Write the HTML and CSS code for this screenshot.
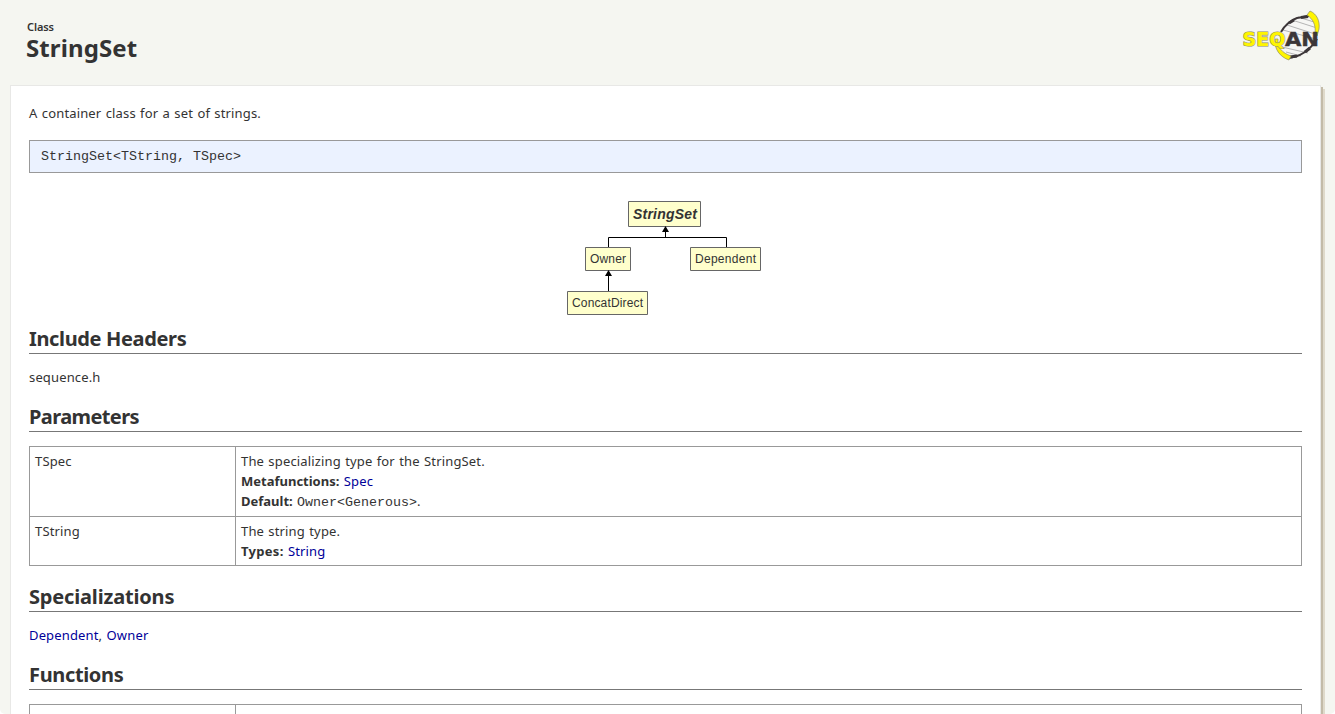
FILE: index.html
```html
<!DOCTYPE html>
<html lang="en">
<head>
<meta charset="utf-8">
<title>StringSet</title>
<link rel="stylesheet" href="styles.css">
</head>
<body>
<header class="header">
  <div>
    <div class="kind">Class</div>
    <h1 class="title">StringSet</h1>
  </div>
  <svg class="logo" width="84" height="56" viewBox="0 0 84 56">
    <path d="M40 24C46 14 56 9 67 8C75 11 79 20 78 30C71 42 61 48 51 49C42 46 37 35 40 24Z" fill="#f6f6f4"/>
    <path d="M47 17l28 9M52 12l25 8M58 9l16 5M43 22l33 9M42 39l26 6M46 44l15 4" stroke="#b4b4b4" stroke-width="1"/>
    <path d="M41 24C44 18 51 12 57 10L69 8M48 50C60 49 70 42 77 31" fill="none" stroke="#3c3638" stroke-width="2"/>
    <path d="M49 15l5-3M61 9.500l7-1M50 49l7-1M65 44l5-4" stroke="#3c3638" stroke-width="3"/>
    <path d="M70 3C77 6 80 13 79 21L77 28L75 25C76 17 73 11 67 7Z" fill="#fff500" stroke="#8e8c60" stroke-width=".7"/>
    <path d="M38 31C37 39 42 45 51 48L49 52C40 49 34 41 35 31Z" fill="#fff500" stroke="#8e8c60" stroke-width=".7"/>
    <text class="logo-yellow" x="2.500" y="37.500" textLength="43" lengthAdjust="spacingAndGlyphs">SEQ</text>
    <text class="logo-dark" x="45" y="37.500" textLength="34" lengthAdjust="spacingAndGlyphs">AN</text>
  </svg>
</header>
<main class="panel">
  <p class="summary">A container class for a set of strings.</p>
  <pre class="signature">StringSet&lt;TString, TSpec&gt;</pre>
  <svg class="graph" width="196" height="116" viewBox="0 0 196 116">
    <g class="node"><path d="M62.500 1.500h72v25h-72zM19.500 47.500h45v23h-45zM124.500 47.500h70v23h-70zM1.500 91.500h80v23h-80z"/></g>
    <path class="edge" d="M42.500 47V37.500H160.500V47M99.500 37V28M42.500 91V72"/>
    <path d="M99.500 26l3.500 6h-7zM42.500 70l3.500 6h-7z"/>
    <text class="root" x="67" y="19" textLength="64">StringSet</text>
    <text x="24" y="63" textLength="36">Owner</text>
    <text x="129" y="63" textLength="61">Dependent</text>
    <text x="6" y="107" textLength="71">ConcatDirect</text>
  </svg>
  <h2>Include Headers</h2>
  <p>sequence.h</p>
  <h2 class="params">Parameters</h2>
  <table>
    <tr class="tall"><td class="key">TSpec</td><td>The specializing type for the StringSet.<br><b>Metafunctions:</b> <a>Spec</a><br><b>Default:</b> <code>Owner&lt;Generous&gt;</code>.</td></tr>
    <tr><td class="key">TString</td><td>The string type.<br><b class="types">Types:</b> <a>String</a></td></tr>
  </table>
  <h2 class="spec">Specializations</h2>
  <p><a>Dependent</a>, <a>Owner</a></p>
  <h2>Functions</h2>
  <table>
    <tr><td class="key"><a>appendValue</a></td><td>Appends a value to a container.</td></tr>
  </table>
</main>
</body>
</html>
```
FILE: styles.css
```css
* { box-sizing: border-box; }
html { background: #fff; overflow: hidden; }
body { margin: 0; height: 714px; overflow: hidden; border-radius: 0 0 5px 5px; background: #f5f6f1; color: #333; font: 13px/20px "Noto Sans", sans-serif; letter-spacing: .15px; word-spacing: .8px; }
.header { display: flex; justify-content: space-between; height: 85px; padding: 8px 11px 0 26px; }
.kind { margin-top: 12px; padding-left: 1px; font-size: 11px; line-height: 14px; font-weight: 600; letter-spacing: -.1px; }
.title { margin: 0; font-size: 24px; line-height: 28px; font-weight: 700; letter-spacing: .1px; }
.logo { display: block; letter-spacing: 0; }
.logo text { font: bold 20px "DejaVu Sans", sans-serif; }
.logo .logo-yellow { fill: #fff500; stroke: #8e8c60; stroke-width: 1.2; paint-order: stroke; }
.logo .logo-dark { fill: #3c3638; stroke: #3c3638; stroke-width: .5; }
.panel { width: 1311px; height: 629px; overflow: hidden; margin-left: 10px; padding: 17px 18px 0; background: #fff; border: 1px solid #e8e8e6; border-bottom: 0; box-shadow: 2px 2px 0 #c3bba8, 4px 4px 0 #dfdacb; }
p { margin: 0; height: 20px; line-height: 18px; }
.summary { line-height: 20px; }
.signature { margin: 17px 0 27px; height: 33px; padding: 0 11px; border: 1px solid #999; background: #ebf2ff; font: 13.33px/31px "Liberation Mono", monospace; letter-spacing: 0; word-spacing: 0; }
.graph { display: block; margin: 0 auto 12px 537px; letter-spacing: 0; }
.graph text { font: 12px "Liberation Sans", sans-serif; fill: #333; }
.graph .root { font: italic bold 14px "Liberation Sans", sans-serif; }
.node { fill: #ffc; stroke: #666; }
.edge { fill: none; stroke: #000; }
h2 { margin: 0 0 14px; height: 26px; border-bottom: 1px solid #777; font-size: 20px; line-height: 22px; font-weight: 700; letter-spacing: -.35px; word-spacing: 0; }
.params { letter-spacing: -.6px; }
.spec { letter-spacing: -.17px; }
p + h2 { margin-top: 18px; }
table + h2 { margin-top: 20px; }
table { width: 100%; border-collapse: collapse; }
.tall { height: 70px; }
td { padding: 4px 5px; border: 1px solid #999; vertical-align: top; }
.key { width: 206px; }
a { color: #009; }
b { letter-spacing: 0; }
.types { letter-spacing: .3px; }
code { font: 13.33px/1 "Liberation Mono", monospace; letter-spacing: 0; }
```
